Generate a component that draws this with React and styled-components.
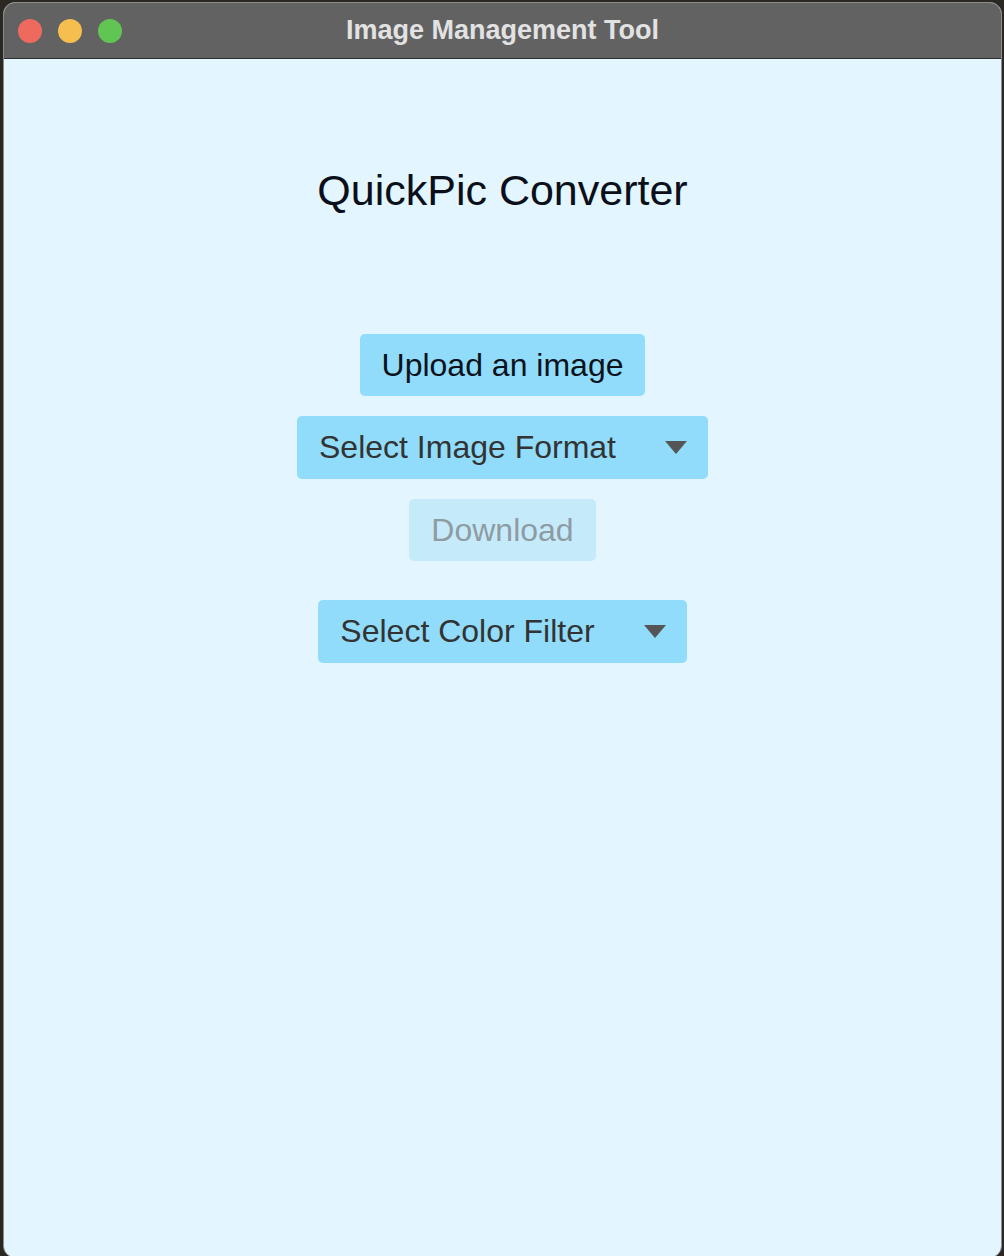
import React, { useState } from 'react';
import styled, { createGlobalStyle } from 'styled-components';

const GlobalStyle = createGlobalStyle`
  html, body {
    margin: 0;
    padding: 0;
    background: #2b2823;
  }
  body {
    font-family: "Liberation Sans", Arial, Helvetica, sans-serif;
  }
`;

const Desktop = styled.div`
  width: 1004px;
  height: 1256px;
  padding: 2px 2px 0 3px;
  box-sizing: border-box;
`;

const Window = styled.div`
  height: 100%;
  display: flex;
  flex-direction: column;
  border-radius: 12px;
  overflow: hidden;
  border: 1px solid #8c8c8c;
  background: #e3f5fe;
`;

const TitleBar = styled.div`
  height: 55px;
  flex-shrink: 0;
  display: flex;
  align-items: center;
  position: relative;
  background: #626262;
  border-bottom: 1px solid #2e2e2e;
`;

const Lights = styled.div`
  display: flex;
  gap: 16px;
  padding-left: 14px;
  padding-top: 1px;
`;

const Light = styled.span`
  width: 24px;
  height: 24px;
  border-radius: 50%;
  background: ${(p) => p.color};
`;

const WindowTitle = styled.div`
  position: absolute;
  left: 0;
  right: 0;
  text-align: center;
  font-size: 27px;
  font-weight: bold;
  color: #e2e2e2;
  pointer-events: none;
`;

const Content = styled.div`
  flex: 1;
  display: flex;
  flex-direction: column;
  align-items: center;
  padding-top: 107px;
`;

const Heading = styled.h1`
  margin: 0 0 120px;
  font-size: 43px;
  font-weight: normal;
  line-height: 48px;
  color: #0a0f1a;
`;

const Controls = styled.div`
  display: flex;
  flex-direction: column;
  align-items: center;
  gap: 20px;
`;

const Button = styled.button`
  height: 62px;
  padding: 0 22px;
  border: none;
  border-radius: 5px;
  font-family: inherit;
  font-size: 32px;
  background: ${(p) => (p.disabled ? '#c5ebfb' : '#90dcfa')};
  color: ${(p) => (p.disabled ? '#8f9ba3' : '#0b121c')};
  cursor: ${(p) => (p.disabled ? 'default' : 'pointer')};
`;

const Select = styled.div`
  height: 63px;
  display: flex;
  align-items: center;
  gap: 49px;
  padding: 0 21px 0 22px;
  border-radius: 5px;
  background: #90dcfa;
  color: #333333;
  font-size: 32px;
  cursor: pointer;
  margin-top: ${(p) => p.$offset || 0}px;
`;

const Arrow = styled.span`
  width: 0;
  height: 0;
  border-left: 11px solid transparent;
  border-right: 11px solid transparent;
  border-top: 13px solid #555555;
`;

export default function App() {
  const [format] = useState(null);
  const [filter] = useState(null);

  return (
    <>
      <GlobalStyle />
      <Desktop>
        <Window>
          <TitleBar>
            <Lights>
              <Light color="#ee6a5f" />
              <Light color="#f5be4f" />
              <Light color="#61c554" />
            </Lights>
            <WindowTitle>Image Management Tool</WindowTitle>
          </TitleBar>
          <Content>
            <Heading>QuickPic Converter</Heading>
            <Controls>
              <Button>Upload an image</Button>
              <Select>
                <span>{format || 'Select Image Format'}</span>
                <Arrow />
              </Select>
              <Button disabled>Download</Button>
              <Select $offset={19}>
                <span>{filter || 'Select Color Filter'}</span>
                <Arrow />
              </Select>
            </Controls>
          </Content>
        </Window>
      </Desktop>
    </>
  );
}
